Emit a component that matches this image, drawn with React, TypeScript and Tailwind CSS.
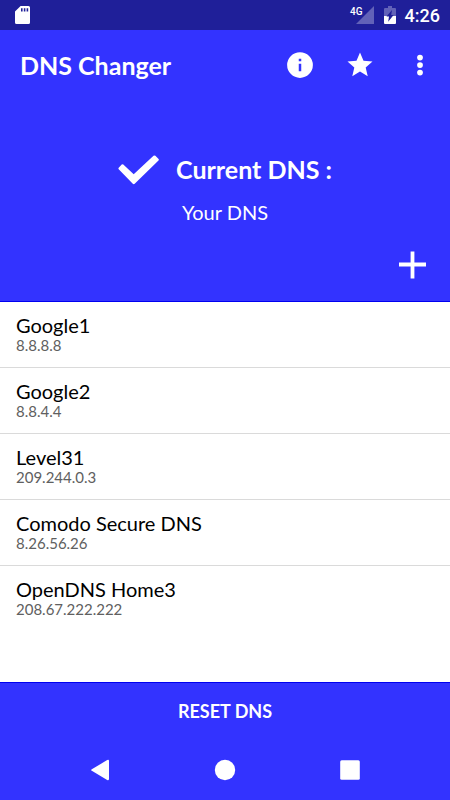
import React from "react";

interface DnsServer {
  name: string;
  address: string;
}

const servers: DnsServer[] = [
  { name: 'Google1', address: '8.8.8.8' },
  { name: 'Google2', address: '8.8.4.4' },
  { name: 'Level31', address: '209.244.0.3' },
  { name: 'Comodo Secure DNS', address: '8.26.56.26' },
  { name: 'OpenDNS Home3', address: '208.67.222.222' },
];

function StatusBar() {
  return (
    <div className="flex h-[30px] items-center justify-between bg-[#1f1f99] pl-[15px] pr-[10px] text-white">
      <svg className="h-[18px] w-[15px]" viewBox="0 0 15 18" fill="currentColor">
        <path
          fillRule="evenodd"
          d="M5.6 0H13.5A1.5 1.5 0 0 1 15 1.5V16.5A1.5 1.5 0 0 1 13.5 18H1.5A1.5 1.5 0 0 1 0 16.5V5.6ZM6 2.2V5.4H7.6V2.2ZM8.8 2.2V5.4H10.4V2.2ZM11.6 2.2V5.4H13.2V2.2Z"
        />
      </svg>
      <div className="flex items-center font-['Roboto']">
        <span className="h-4 text-[10px] font-medium leading-[10px]">4G</span>
        <svg className="-ml-[7px] mr-2.5 h-[18px] w-[18px]" viewBox="0 0 18 18">
          <path d="M18 0V18H0Z" fill="#6262b8" />
        </svg>
        <svg className="mr-[9px] h-[18px] w-[12px]" viewBox="0 0 12 18">
          <path d="M4 0H8V2H11A1 1 0 0 1 12 3V10H0V3A1 1 0 0 1 1 2H4Z" fill="#6262b8" />
          <path d="M0 10H12V17A1 1 0 0 1 11 18H1A1 1 0 0 1 0 17Z" fill="#fff" />
          <path d="M8 4L2.5 10.6H5L4.2 15.8L9.6 9H7.2Z" fill="#1f1f99" />
        </svg>
        <span className="pt-0.5 text-lg font-medium leading-7">4:26</span>
      </div>
    </div>
  );
}

function AppBar() {
  return (
    <header className="flex h-[70px] items-center justify-between pl-5 pr-[15px]">
      <h1 className="pt-0.5 text-[25px] font-bold">DNS Changer</h1>
      <div className="flex gap-[30px]">
        <button type="button" aria-label="About">
          <svg className="h-[30px] w-[30px]" viewBox="0 0 24 24" fill="currentColor">
            <path d="M12 1.7a10.3 10.3 0 1 0 0 20.6a10.3 10.3 0 0 0 0-20.6zm1 15.3h-2v-6h2v6zm0-8h-2V7h2v2z" />
          </svg>
        </button>
        <button type="button" aria-label="Rate">
          <svg className="h-[30px] w-[30px]" viewBox="0 0 24 24" fill="currentColor">
            <path d="M12 17.27L18.18 21l-1.64-7.03L22 9.24l-7.19-.61L12 2 9.19 8.63 2 9.24l5.46 4.73L5.82 21z" />
          </svg>
        </button>
        <button type="button" aria-label="More options">
          <svg className="h-[30px] w-[30px]" viewBox="0 0 24 24" fill="currentColor">
            <circle cx="12" cy="6" r="2.3" />
            <circle cx="12" cy="12" r="2.3" />
            <circle cx="12" cy="18" r="2.3" />
          </svg>
        </button>
      </div>
    </header>
  );
}

function CurrentDns() {
  return (
    <section className="flex flex-col items-center pt-[50px]">
      <div className="flex h-10 items-center gap-4">
        <svg className="h-[30px] w-[42px]" viewBox="0 0 42 30">
          <path
            d="M0.7 14.3Q0 13.5 0.7 12.7L3.7 9.6Q4.5 8.9 5.3 9.6L15.7 19.3L35.5 0.8Q36.5 0.1 37.4 0.8L40.6 4Q41.3 4.8 40.5 5.6L16.7 28.8Q15.7 29.6 14.8 28.8Z"
            fill="#fff"
          />
        </svg>
        <h2 className="text-[25px] font-bold">Current DNS :</h2>
      </div>
      <p className="mt-2 text-xl leading-7">Your DNS</p>
      <button type="button" aria-label="Add DNS" className="mb-5 mr-[22px] mt-[23px] self-end">
        <svg className="h-8 w-8" viewBox="0 0 32 32" fill="currentColor">
          <path d="M14.6 2.5H18.4V13.6H30V17.4H18.4V29.5H14.6V17.4H3V13.6H14.6Z" />
        </svg>
      </button>
    </section>
  );
}

function NavigationBar() {
  return (
    <nav className="flex h-[60px] items-center justify-center gap-[95px]">
      <button type="button" aria-label="Back">
        <svg className="h-[30px] w-[30px]" viewBox="0 0 30 30" fill="currentColor">
          <path d="M6.8 14.2L22.2 5.1Q24 4.3 24 6V24Q24 25.7 22.2 24.9L6.8 15.8Q5.4 15 6.8 14.2Z" />
        </svg>
      </button>
      <button type="button" aria-label="Home">
        <svg className="h-[30px] w-[30px]" viewBox="0 0 30 30" fill="currentColor">
          <circle cx="15" cy="15" r="10.2" />
        </svg>
      </button>
      <button type="button" aria-label="Recent apps">
        <svg className="h-[30px] w-[30px]" viewBox="0 0 30 30" fill="currentColor">
          <rect x="5.2" y="5.2" width="19.6" height="19.6" rx="1.5" />
        </svg>
      </button>
    </nav>
  );
}

export default function App() {
  return (
    <div className="flex min-h-screen flex-col bg-white font-['Lato',sans-serif]">
      <StatusBar />

      {/* Header and current server */}
      <div className="border-b border-[#0000f0] bg-[#3333ff] text-white">
        <AppBar />
        <CurrentDns />
      </div>

      {/* Server list */}
      <ul className="flex-1">
        {servers.map((server, index) => (
          <li
            key={server.name}
            className={`h-[66px] px-4 pt-[11px] ${index < servers.length - 1 ? 'border-b border-[#dadada]' : ''}`}
          >
            <div className="text-xl leading-6 text-black">{server.name}</div>
            <div className="text-[15px] leading-4 text-[#606060]">{server.address}</div>
          </li>
        ))}
      </ul>

      {/* Footer */}
      <footer className="border-t border-[#0000f0] bg-[#3333ff] text-white">
        <button type="button" className="block h-[57px] w-full pb-0.5 text-lg font-bold">
          RESET DNS
        </button>
        <NavigationBar />
      </footer>
    </div>
  );
}
